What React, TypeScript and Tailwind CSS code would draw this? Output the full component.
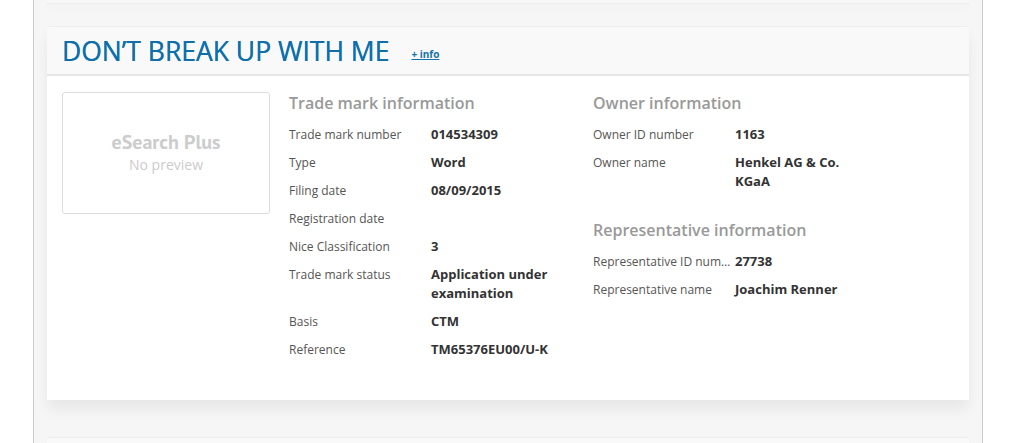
import React from "react";

interface Row {
  label: string;
  value: string[];
}

const tradeMarkRows: Row[] = [
  { label: "Trade mark number", value: ["014534309"] },
  { label: "Type", value: ["Word"] },
  { label: "Filing date", value: ["08/09/2015"] },
  { label: "Registration date", value: [] },
  { label: "Nice Classification", value: ["3"] },
  { label: "Trade mark status", value: ["Application under", "examination"] },
  { label: "Basis", value: ["CTM"] },
  { label: "Reference", value: ["TM65376EU00/U-K"] },
];

const ownerRows: Row[] = [
  { label: "Owner ID number", value: ["1163"] },
  { label: "Owner name", value: ["Henkel AG & Co.", "KGaA"] },
];

const repRows: Row[] = [
  { label: "Representative ID number", value: ["27738"] },
  { label: "Representative name", value: ["Joachim Renner"] },
];

function InfoBlock({ title, rows }: { title: string; rows: Row[] }) {
  return (
    <div>
      <h3 className="text-[16px] leading-[22px] font-semibold text-[#999999] mb-[11px]">{title}</h3>
      {rows.map((row) => (
        <div key={row.label} className="flex leading-[19px] mb-[9px]">
          <div className="w-[142px] shrink-0 pr-[3px] truncate text-[12px] text-[#555555]">{row.label}</div>
          <div className="text-[13px] font-bold text-[#333333]">
            {row.value.map((v) => (
              <div key={v}>{v}</div>
            ))}
            {row.value.length === 0 && <div>&nbsp;</div>}
          </div>
        </div>
      ))}
    </div>
  );
}

export default function App() {
  return (
    <div className="min-h-[443px] bg-white" style={{ fontFamily: '"Open Sans", sans-serif' }}>
      <div className="ml-[33px] w-[950px] min-h-[443px] bg-[#f6f6f6] border-x border-[#cccccc] px-[13px] overflow-hidden">
        {/* Previous card tail */}
        <div className="h-[4px] bg-[#f7f7f7] border-b border-[#ececec] shadow-[0_4px_8px_rgba(0,0,0,0.03)]" />

        {/* Card */}
        <div className="mt-[22px] rounded-[3px] border-t border-[#eeeeee] shadow-[0_10px_14px_rgba(0,0,0,0.06)]">
          <div className="h-[49px] bg-[#f9f9f9] border-b-2 border-[#e6e6e6] px-[15px] flex items-center rounded-t-[3px]">
            <h2 className="text-[26.5px] leading-[32px] text-[#0f6fab] mt-[1px] [text-shadow:0_0_0.4px_#0f6fab]">DON’T BREAK UP WITH ME</h2>
            <a className="ml-[22px] mt-[8px] text-[10px] font-bold text-[#1374ae] underline">+ info</a>
          </div>
          <div className="bg-white px-[15px] pt-[16px] pb-[32px] flex">
            <div className="w-[208px] h-[122px] shrink-0 border border-[#dddddd] rounded-[3px] flex flex-col items-center justify-center">
              <div className="text-[20px] leading-[24px] font-bold text-[#cccccc]" style={{ fontFamily: '"PT Sans", "Liberation Sans", sans-serif' }}>
                eSearch Plus
              </div>
              <div className="text-[14px] leading-[22px] text-[#cccccc]">No preview</div>
            </div>
            <div className="ml-[19px] w-[304px] shrink-0">
              <InfoBlock title="Trade mark information" rows={tradeMarkRows} />
            </div>
            <div className="w-[300px]">
              <div className="mb-[28px]">
                <InfoBlock title="Owner information" rows={ownerRows} />
              </div>
              <InfoBlock title="Representative information" rows={repRows} />
            </div>
          </div>
        </div>

        {/* Next card top */}
        <div className="mt-[37px] h-[20px] bg-[#f9f9f9] border-t border-[#eeeeee] rounded-t-[3px]" />
      </div>
    </div>
  );
}
